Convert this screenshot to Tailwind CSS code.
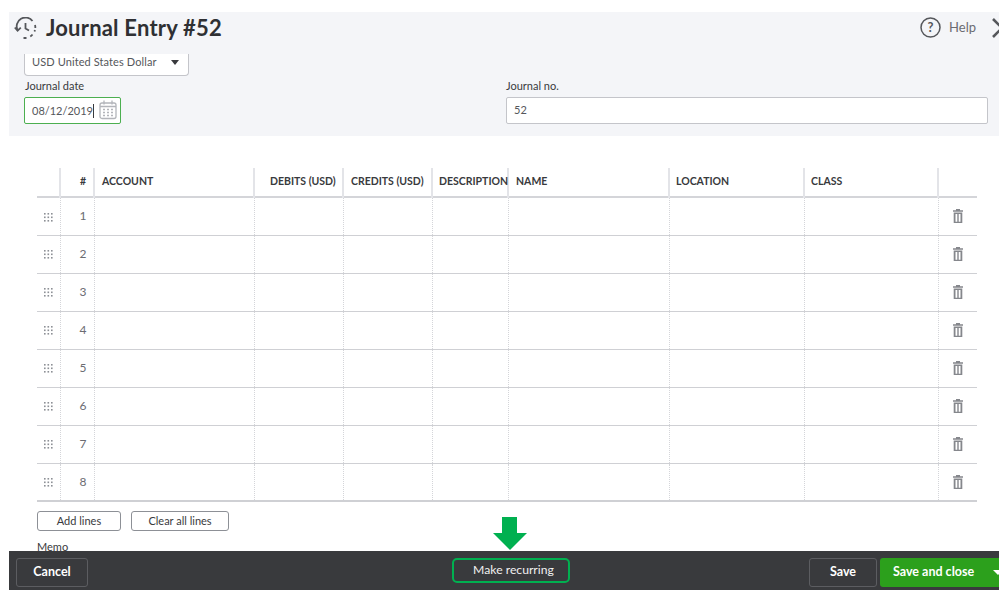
<!DOCTYPE html>
<html lang="en">
<head>
  <meta charset="UTF-8">
  <title>Journal Entry #52</title>
  <script src="https://cdn.jsdelivr.net/npm/@tailwindcss/browser@4"></script>
</head>
<body class="bg-white font-['Lato',sans-serif] text-[#393a3d] w-[999px] h-[590px] overflow-hidden flex flex-col pl-[9px]">
  <svg class="hidden">
    <symbol id="dots" viewBox="0 0 9 9"><g fill="#8d9096"><rect x="0" y="0" width="1.6" height="1.6"/><rect x="3.5" y="0" width="1.6" height="1.6"/><rect x="7" y="0" width="1.6" height="1.6"/><rect x="0" y="3.5" width="1.6" height="1.6"/><rect x="3.5" y="3.5" width="1.6" height="1.6"/><rect x="7" y="3.5" width="1.6" height="1.6"/><rect x="0" y="7" width="1.6" height="1.6"/><rect x="3.5" y="7" width="1.6" height="1.6"/><rect x="7" y="7" width="1.6" height="1.6"/></g></symbol>
    <symbol id="trash" viewBox="0 0 10 14"><path d="M3 0h4v1.200h3v1.600H0V1.200h3zM.7 3.600h8.600V14H.7zM2.500 5v7.700h1.800V5zm3.200 0v7.700h1.800V5z" fill="#85878c" fill-rule="evenodd"/></symbol>
  </svg>

  <!-- header panel -->
  <section class="mt-3 h-[124px] bg-[#f4f5f8] shrink-0 flex flex-col">
    <div class="h-[42px] flex items-center pl-[5px] pb-[11px] shrink-0">
      <svg class="w-[23px] h-[22px]" viewBox="0 0 23 22" fill="none" stroke="#55575b" stroke-width="1.800">
        <path d="M3.500 13A8.800 8.800 0 0 1 18.500 4"/>
        <path d="M21 8a9 9 0 0 1-.6 6.500M18.500 17.500a9 9 0 0 1-3 2.500M12.500 21H9.500" stroke-dasharray="3 2"/>
        <path d="M.8 10.500l2.800 3.200 3.200-3M11.500 6v5.500l3.500 2"/>
      </svg>
      <h1 class="ml-[9px] text-[22px] leading-none font-bold text-[#2f3033] tracking-[0.2px]">Journal Entry #52</h1>
      <div class="ml-auto -mr-[4px] flex items-center">
        <svg class="w-[21px] h-[21px]" viewBox="0 0 21 21" fill="none">
          <circle cx="10.500" cy="10.500" r="9.500" stroke="#55575b" stroke-width="1.500"/>
          <text x="10.500" y="15" text-anchor="middle" font-size="13" font-weight="700" fill="#55575b" font-family="Lato">?</text>
        </svg>
        <span class="ml-2 text-[13px] text-[#6b6c72]">Help</span>
        <svg class="ml-[16px] w-[11px] h-[20px]" viewBox="0 0 11 20" fill="none" stroke="#55575b" stroke-width="2.600"><path d="M1 1l9 9-9 9"/></svg>
      </div>
    </div>
    <div class="pl-[15px] pr-[11px] flex flex-col">
      <div class="w-[165px] h-[22px] pb-[4px] bg-white border border-t-0 border-[#c4c5ca] rounded-b-sm flex items-center pl-[7px] text-[11px] text-[#55575b] tracking-[0.1px]">
        USD United States Dollar
        <span class="ml-[14px] w-0 h-0 border-x-[4px] border-x-transparent border-t-[5px] border-t-[#393a3d]"></span>
      </div>
      <div class="mt-[4px] flex">
        <div class="w-[482px]">
          <label class="block ml-px h-[17px] text-[11px] leading-[12px]">Journal date</label>
          <div class="w-[97px] h-[27px] bg-white border border-[#4caf50] rounded-[2px] flex items-center pl-[7px] text-[11px] text-[#55575b]">
            <span class="border-r border-[#393a3d] leading-[14px]">08/12/2019</span>
            <svg class="ml-[5px] -mt-[2px] w-[18px] h-[20px]" viewBox="0 0 18 20" fill="none" stroke="#b3b5ba"><rect x="1" y="3" width="16" height="15.500" rx="2" stroke-width="1.300"/><path d="M5 .5v4M13 .5v4M1 6.500h16" stroke-width="1.300"/><path d="M4 9.500h10M4 12.500h10M4 15.500h10" stroke-width="1.500" stroke-dasharray="2 2"/></svg>
          </div>
        </div>
        <div class="flex-1">
          <label class="block h-[17px] text-[11px] leading-[12px]">Journal no.</label>
          <div class="h-[27px] bg-white border border-[#c4c5ca] rounded-[2px] flex items-center pl-[7px] text-[11px] text-[#55575b]">52</div>
        </div>
      </div>
    </div>
  </section>

  <!-- lines table -->
  <main class="pl-7 pr-[22px] pt-[32px] flex-1 min-h-0 overflow-hidden">
    <table class="w-[940px] table-fixed border-collapse text-[#393a3d]">
      <colgroup>
        <col class="w-[23px]"><col class="w-[34px]"><col class="w-[160px]"><col class="w-[89px]"><col class="w-[89px]"><col class="w-[76px]"><col class="w-[161px]"><col class="w-[135px]"><col class="w-[134px]"><col class="w-[39px]">
      </colgroup>
      <thead>
        <tr class="h-[29px] border-b-2 border-[#d4d5d9] text-[10.500px] font-bold text-left [&>th]:font-bold [&>th]:border-l-2 [&>th]:border-[#e3e4e8] [&>th:first-child]:border-l-0 [&>th]:pl-[6px]">
          <th></th><th class="text-right pr-[7px]">#</th><th class="!pl-[7px]">ACCOUNT</th><th class="!pl-[15px]">DEBITS (USD)</th><th class="!pl-[7px]">CREDITS (USD)</th><th class="whitespace-nowrap">DESCRIPTION</th><th class="!pl-[7px]">NAME</th><th>LOCATION</th><th>CLASS</th><th></th>
        </tr>
      </thead>
      <tbody class="[&>tr]:h-[38px] [&>tr]:border-b [&>tr]:border-[#cfd0d4] [&_td]:border-l [&_td]:border-dotted [&_td]:border-[#d4d5d9] [&_td:first-child]:border-l-0 text-xs text-[#6b6c72]">
        <tr><td class="text-center"><svg class="w-[9px] h-[9px] inline-block"><use href="#dots"/></svg></td><td class="text-right pr-[7px]">1</td><td></td><td></td><td></td><td></td><td></td><td></td><td></td><td class="text-center"><svg class="w-[10px] h-[14px] inline-block -mt-[2px]"><use href="#trash"/></svg></td></tr>
        <tr><td class="text-center"><svg class="w-[9px] h-[9px] inline-block"><use href="#dots"/></svg></td><td class="text-right pr-[7px]">2</td><td></td><td></td><td></td><td></td><td></td><td></td><td></td><td class="text-center"><svg class="w-[10px] h-[14px] inline-block -mt-[2px]"><use href="#trash"/></svg></td></tr>
        <tr><td class="text-center"><svg class="w-[9px] h-[9px] inline-block"><use href="#dots"/></svg></td><td class="text-right pr-[7px]">3</td><td></td><td></td><td></td><td></td><td></td><td></td><td></td><td class="text-center"><svg class="w-[10px] h-[14px] inline-block -mt-[2px]"><use href="#trash"/></svg></td></tr>
        <tr><td class="text-center"><svg class="w-[9px] h-[9px] inline-block"><use href="#dots"/></svg></td><td class="text-right pr-[7px]">4</td><td></td><td></td><td></td><td></td><td></td><td></td><td></td><td class="text-center"><svg class="w-[10px] h-[14px] inline-block -mt-[2px]"><use href="#trash"/></svg></td></tr>
        <tr><td class="text-center"><svg class="w-[9px] h-[9px] inline-block"><use href="#dots"/></svg></td><td class="text-right pr-[7px]">5</td><td></td><td></td><td></td><td></td><td></td><td></td><td></td><td class="text-center"><svg class="w-[10px] h-[14px] inline-block -mt-[2px]"><use href="#trash"/></svg></td></tr>
        <tr><td class="text-center"><svg class="w-[9px] h-[9px] inline-block"><use href="#dots"/></svg></td><td class="text-right pr-[7px]">6</td><td></td><td></td><td></td><td></td><td></td><td></td><td></td><td class="text-center"><svg class="w-[10px] h-[14px] inline-block -mt-[2px]"><use href="#trash"/></svg></td></tr>
        <tr><td class="text-center"><svg class="w-[9px] h-[9px] inline-block"><use href="#dots"/></svg></td><td class="text-right pr-[7px]">7</td><td></td><td></td><td></td><td></td><td></td><td></td><td></td><td class="text-center"><svg class="w-[10px] h-[14px] inline-block -mt-[2px]"><use href="#trash"/></svg></td></tr>
        <tr class="!border-b-2"><td class="text-center"><svg class="w-[9px] h-[9px] inline-block"><use href="#dots"/></svg></td><td class="text-right pr-[7px]">8</td><td></td><td></td><td></td><td></td><td></td><td></td><td></td><td class="text-center"><svg class="w-[10px] h-[14px] inline-block -mt-[2px]"><use href="#trash"/></svg></td></tr>
      </tbody>
    </table>
    <div class="mt-[9px] flex gap-[10px] text-[11px] text-[#393a3d]">
      <button class="w-[84px] h-[20px] border border-[#8d9096] rounded-[3px]">Add lines</button>
      <button class="w-[98px] h-[20px] border border-[#8d9096] rounded-[3px]">Clear all lines</button>
    </div>
    <p class="mt-[9px] text-[11px] leading-[13px]">Memo</p>
  </main>

  <!-- footer bar -->
  <footer class="relative h-[39px] shrink-0 bg-[#393a3d] flex items-center pl-[7px] pt-1 text-[12.500px] font-bold text-white">
    <button class="w-[72px] h-[29px] border border-[#5c5d61] rounded-[3px]">Cancel</button>
    <div class="absolute left-[443px] top-[7px] flex flex-col items-center">
      <svg class="absolute left-[41px] -top-[41px] w-[34px] h-[33px]" viewBox="0 0 34 33"><path d="M9 0h15v16h10L17 33 0 16h9z" fill="#00b050"/></svg>
      <button class="w-[118px] h-[25px] pl-[5px] border-2 border-[#00b050] rounded-[5px] font-normal text-[12.200px] text-[#f0f0f0]">Make recurring</button>
    </div>
    <button class="ml-auto w-[68px] h-[29px] border border-[#5c5d61] rounded-[3px]">Save</button>
    <button class="ml-[3px] w-[119px] h-[29px] bg-[#2ca01c] rounded-l-[3px] flex items-center pl-[13px] whitespace-nowrap">Save and close<span class="ml-[19px] w-0 h-0 border-x-[5px] border-x-transparent border-t-[5px] border-t-white"></span></button>
  </footer>
</body>
</html>
